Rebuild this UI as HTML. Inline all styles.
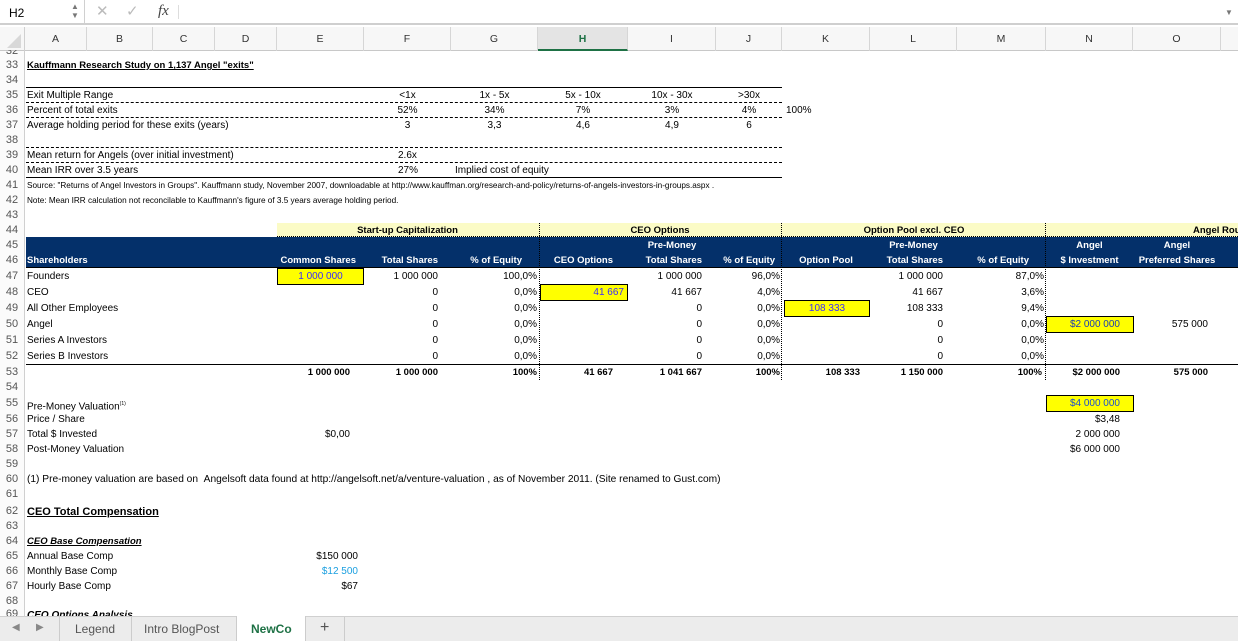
<!DOCTYPE html>
<html><head><meta charset="utf-8"><style>
*{margin:0;padding:0;box-sizing:border-box}
body{width:1238px;height:641px;overflow:hidden;background:#fff;position:relative;font-family:"Liberation Sans",sans-serif;color:#000}
.a{position:absolute;height:14px;line-height:14px;white-space:nowrap;font-size:10px;margin-top:1px}
.r{text-align:right}.c{text-align:center}.b{font-weight:bold}
.rn{position:absolute;left:0;width:24px;text-align:center;font-size:11px;color:#555;height:14px;line-height:14px}
.ch{position:absolute;top:27px;height:24px;line-height:24px;text-align:center;font-size:10.5px;color:#333;border-right:1px solid #d6d6d6}
.ln{position:absolute;height:0}
.vd{position:absolute;width:0;border-left:1.5px dotted #000}
.yb{position:absolute;background:#ffff00;border:1px solid #000}
.w{color:#fff;font-weight:bold;font-size:9.5px}
.blue{color:#3a2cff}
</style></head><body>
<div style="position:absolute;left:0;top:0;width:1238px;height:25px;background:#fff;border-bottom:2px solid #cfcfcf"></div>
<div class="a" style="left:9px;top:4px;font-size:12px;height:16px;line-height:16px">H2</div>
<div class="a" style="left:71px;top:1px;font-size:8px;color:#777;line-height:9px">▲<br>▼</div>
<div style="position:absolute;left:84px;top:0;width:1px;height:25px;background:#d0d0d0"></div>
<div class="a" style="left:96px;top:3px;font-size:15px;color:#bbb;height:16px;line-height:16px">✕</div>
<div class="a" style="left:126px;top:3px;font-size:15px;color:#bbb;height:16px;line-height:16px">✓</div>
<div class="a" style="left:158px;top:2px;font-size:15px;font-style:italic;font-family:'Liberation Serif',serif;color:#444;height:16px;line-height:16px">fx</div>
<div style="position:absolute;left:178px;top:5px;width:1px;height:14px;background:#ddd"></div>
<div class="a" style="left:1225px;top:5px;font-size:8px;color:#777">▼</div>
<div style="position:absolute;left:0;top:27px;width:1238px;height:24px;background:#f7f7f7;border-bottom:1px solid #c8c8c8"></div>
<div style="position:absolute;left:0;top:27px;width:25px;height:24px;border-right:1px solid #d0d0d0"><div style="position:absolute;right:3px;bottom:3px;width:0;height:0;border-left:14px solid transparent;border-bottom:14px solid #d8d8d8"></div></div>
<div class="ch" style="left:25px;width:62px">A</div>
<div class="ch" style="left:87px;width:66px">B</div>
<div class="ch" style="left:153px;width:62px">C</div>
<div class="ch" style="left:215px;width:62px">D</div>
<div class="ch" style="left:277px;width:87px">E</div>
<div class="ch" style="left:364px;width:87px">F</div>
<div class="ch" style="left:451px;width:87px">G</div>
<div class="ch" style="left:538px;width:90px;background:#e4e4e4;color:#1e7145;font-weight:bold;border-bottom:2px solid #1e7145">H</div>
<div class="ch" style="left:628px;width:88px">I</div>
<div class="ch" style="left:716px;width:66px">J</div>
<div class="ch" style="left:782px;width:88px">K</div>
<div class="ch" style="left:870px;width:87px">L</div>
<div class="ch" style="left:957px;width:89px">M</div>
<div class="ch" style="left:1046px;width:87px">N</div>
<div class="ch" style="left:1133px;width:88px">O</div>
<div style="position:absolute;left:0;top:51px;width:25px;height:565px;background:#fbfbfb;border-right:1px solid #d0d0d0"></div>
<div class="rn" style="top:50px;height:6px;overflow:hidden;line-height:2px">32</div>
<div class="rn" style="top:58px">33</div><div class="rn" style="top:73px">34</div><div class="rn" style="top:88px">35</div><div class="rn" style="top:103px">36</div><div class="rn" style="top:118px">37</div><div class="rn" style="top:133px">38</div><div class="rn" style="top:148px">39</div><div class="rn" style="top:163px">40</div><div class="rn" style="top:178px">41</div><div class="rn" style="top:193px">42</div><div class="rn" style="top:208px">43</div><div class="rn" style="top:223px">44</div><div class="rn" style="top:238px">45</div><div class="rn" style="top:253px">46</div><div class="rn" style="top:269px">47</div><div class="rn" style="top:285px">48</div><div class="rn" style="top:301px">49</div><div class="rn" style="top:317px">50</div><div class="rn" style="top:333px">51</div><div class="rn" style="top:349px">52</div><div class="rn" style="top:365px">53</div><div class="rn" style="top:380px">54</div><div class="rn" style="top:396px">55</div><div class="rn" style="top:412px">56</div><div class="rn" style="top:427px">57</div><div class="rn" style="top:442px">58</div><div class="rn" style="top:457px">59</div><div class="rn" style="top:472px">60</div><div class="rn" style="top:487px">61</div><div class="rn" style="top:504px">62</div><div class="rn" style="top:519px">63</div><div class="rn" style="top:534px">64</div><div class="rn" style="top:549px">65</div><div class="rn" style="top:564px">66</div><div class="rn" style="top:579px">67</div><div class="rn" style="top:594px">68</div><div class="rn" style="top:607px">69</div>

<div class="a b" style="left:27px;top:58px;text-decoration:underline;font-size:9.5px">Kauffmann Research Study on 1,137 Angel "exits"</div>
<div class="ln" style="left:26px;top:87px;width:756px;border-top:1px solid #000"></div>
<div class="ln" style="left:26px;top:102px;width:756px;border-top:1px dashed #000"></div>
<div class="ln" style="left:26px;top:117px;width:756px;border-top:1px dashed #000"></div>
<div class="ln" style="left:26px;top:147px;width:756px;border-top:1px dashed #000"></div>
<div class="ln" style="left:26px;top:162px;width:756px;border-top:1px dashed #000"></div>
<div class="ln" style="left:26px;top:177px;width:756px;border-top:1px solid #000"></div>
<div class="a" style="left:27px;top:88px">Exit Multiple Range</div>
<div class="a" style="left:27px;top:103px">Percent of total exits</div>
<div class="a" style="left:27px;top:118px">Average holding period for these exits (years)</div>
<div class="a" style="left:27px;top:148px">Mean return for Angels (over initial investment)</div>
<div class="a" style="left:27px;top:163px">Mean IRR over 3.5 years</div>
<div class="a c" style="left:364px;width:87px;top:88px">&lt;1x</div>
<div class="a c" style="left:451px;width:87px;top:88px">1x - 5x</div>
<div class="a c" style="left:538px;width:90px;top:88px">5x - 10x</div>
<div class="a c" style="left:628px;width:88px;top:88px">10x - 30x</div>
<div class="a c" style="left:716px;width:66px;top:88px">&gt;30x</div>
<div class="a c" style="left:364px;width:87px;top:103px">52%</div>
<div class="a c" style="left:451px;width:87px;top:103px">34%</div>
<div class="a c" style="left:538px;width:90px;top:103px">7%</div>
<div class="a c" style="left:628px;width:88px;top:103px">3%</div>
<div class="a c" style="left:716px;width:66px;top:103px">4%</div>
<div class="a" style="left:786px;top:103px">100%</div>
<div class="a c" style="left:364px;width:87px;top:118px">3</div>
<div class="a c" style="left:451px;width:87px;top:118px">3,3</div>
<div class="a c" style="left:538px;width:90px;top:118px">4,6</div>
<div class="a c" style="left:628px;width:88px;top:118px">4,9</div>
<div class="a c" style="left:716px;width:66px;top:118px">6</div>
<div class="a" style="left:398px;top:148px">2.6x</div>
<div class="a" style="left:398px;top:163px">27%</div>
<div class="a" style="left:455px;top:163px">Implied cost of equity</div>
<div class="a" style="left:27px;top:178px;font-size:8.2px">Source: "Returns of Angel Investors in Groups". Kauffmann study, November 2007, downloadable at http://www.kauffman.org/research-and-policy/returns-of-angels-investors-in-groups.aspx .</div>
<div class="a" style="left:27px;top:193px;font-size:8.2px">Note: Mean IRR calculation not reconcilable to Kauffmann's figure of 3.5 years average holding period.</div>

<div style="position:absolute;left:277px;top:223px;width:961px;height:14px;background:#fbfbc6;border-bottom:1px dotted #000"></div>
<div style="position:absolute;left:26px;top:237px;width:1212px;height:31px;background:#04306a;border-bottom:1.5px solid #000"></div>
<div class="ln" style="left:26px;top:364px;width:1212px;border-top:1.5px solid #000"></div>
<div class="vd" style="left:539px;top:223px;height:157px"></div>
<div class="vd" style="left:781px;top:223px;height:157px"></div>
<div class="vd" style="left:1045px;top:223px;height:157px"></div>
<div class="a b c" style="left:277px;width:261px;top:223px;font-size:9.5px">Start-up Capitalization</div>
<div class="a b c" style="left:540px;width:240px;top:223px;font-size:9.5px">CEO Options</div>
<div class="a b c" style="left:783px;width:262px;top:223px;font-size:9.5px">Option Pool excl. CEO</div>
<div class="a b" style="left:1193px;top:223px;font-size:9.5px">Angel Rou</div>
<div class="a w c" style="left:628px;width:88px;top:238px">Pre-Money</div>
<div class="a w c" style="left:870px;width:87px;top:238px">Pre-Money</div>
<div class="a w c" style="left:1046px;width:87px;top:238px">Angel</div>
<div class="a w c" style="left:1133px;width:88px;top:238px">Angel</div>
<div class="a w" style="left:27px;top:253px">Shareholders</div>
<div class="a w r" style="left:0;width:356px;top:253px">Common Shares</div>
<div class="a w r" style="left:0;width:438px;top:253px">Total Shares</div>
<div class="a w r" style="left:0;width:522px;top:253px">% of Equity</div>
<div class="a w r" style="left:0;width:613px;top:253px">CEO Options</div>
<div class="a w r" style="left:0;width:702px;top:253px">Total Shares</div>
<div class="a w r" style="left:0;width:775px;top:253px">% of Equity</div>
<div class="a w c" style="left:782px;width:88px;top:253px">Option Pool</div>
<div class="a w r" style="left:0;width:943px;top:253px">Total Shares</div>
<div class="a w r" style="left:0;width:1029px;top:253px">% of Equity</div>
<div class="a w c" style="left:1046px;width:87px;top:253px">$ Investment</div>
<div class="a w c" style="left:1133px;width:88px;top:253px">Preferred Shares</div>

<div class="yb" style="left:277px;top:268px;width:87px;height:17px"></div>
<div class="yb" style="left:540px;top:284px;width:88px;height:17px"></div>
<div class="yb" style="left:784px;top:300px;width:86px;height:17px"></div>
<div class="yb" style="left:1046px;top:316px;width:88px;height:17px"></div>

<div class="a" style="left:27px;top:269px">Founders</div>
<div class="a" style="left:27px;top:285px">CEO</div>
<div class="a" style="left:27px;top:301px">All Other Employees</div>
<div class="a" style="left:27px;top:317px">Angel</div>
<div class="a" style="left:27px;top:333px">Series A Investors</div>
<div class="a" style="left:27px;top:349px">Series B Investors</div>

<div class="a blue c" style="left:277px;width:87px;top:269px">1 000 000</div>
<div class="a blue r" style="left:0;width:624px;top:285px">41 667</div>
<div class="a blue c" style="left:784px;width:86px;top:301px">108 333</div>
<div class="a r" style="left:0;width:1120px;top:317px;color:#1a3bb5">$2 000 000</div>
<div class="a r" style="left:0;width:1208px;top:317px">575 000</div>

<div class="a r" style="left:0;width:438px;top:269px">1 000 000</div><div class="a r" style="left:0;width:537px;top:269px">100,0%</div>
<div class="a r" style="left:0;width:438px;top:285px">0</div><div class="a r" style="left:0;width:537px;top:285px">0,0%</div>
<div class="a r" style="left:0;width:438px;top:301px">0</div><div class="a r" style="left:0;width:537px;top:301px">0,0%</div>
<div class="a r" style="left:0;width:438px;top:317px">0</div><div class="a r" style="left:0;width:537px;top:317px">0,0%</div>
<div class="a r" style="left:0;width:438px;top:333px">0</div><div class="a r" style="left:0;width:537px;top:333px">0,0%</div>
<div class="a r" style="left:0;width:438px;top:349px">0</div><div class="a r" style="left:0;width:537px;top:349px">0,0%</div>
<div class="a r" style="left:0;width:702px;top:269px">1 000 000</div><div class="a r" style="left:0;width:780px;top:269px">96,0%</div>
<div class="a r" style="left:0;width:702px;top:285px">41 667</div><div class="a r" style="left:0;width:780px;top:285px">4,0%</div>
<div class="a r" style="left:0;width:702px;top:301px">0</div><div class="a r" style="left:0;width:780px;top:301px">0,0%</div>
<div class="a r" style="left:0;width:702px;top:317px">0</div><div class="a r" style="left:0;width:780px;top:317px">0,0%</div>
<div class="a r" style="left:0;width:702px;top:333px">0</div><div class="a r" style="left:0;width:780px;top:333px">0,0%</div>
<div class="a r" style="left:0;width:702px;top:349px">0</div><div class="a r" style="left:0;width:780px;top:349px">0,0%</div>
<div class="a r" style="left:0;width:943px;top:269px">1 000 000</div><div class="a r" style="left:0;width:1044px;top:269px">87,0%</div>
<div class="a r" style="left:0;width:943px;top:285px">41 667</div><div class="a r" style="left:0;width:1044px;top:285px">3,6%</div>
<div class="a r" style="left:0;width:943px;top:301px">108 333</div><div class="a r" style="left:0;width:1044px;top:301px">9,4%</div>
<div class="a r" style="left:0;width:943px;top:317px">0</div><div class="a r" style="left:0;width:1044px;top:317px">0,0%</div>
<div class="a r" style="left:0;width:943px;top:333px">0</div><div class="a r" style="left:0;width:1044px;top:333px">0,0%</div>
<div class="a r" style="left:0;width:943px;top:349px">0</div><div class="a r" style="left:0;width:1044px;top:349px">0,0%</div>
<div class="a b r" style="left:0;width:350px;top:365px;font-size:9.5px">1 000 000</div>
<div class="a b r" style="left:0;width:438px;top:365px;font-size:9.5px">1 000 000</div>
<div class="a b r" style="left:0;width:537px;top:365px;font-size:9.5px">100%</div>
<div class="a b r" style="left:0;width:613px;top:365px;font-size:9.5px">41 667</div>
<div class="a b r" style="left:0;width:702px;top:365px;font-size:9.5px">1 041 667</div>
<div class="a b r" style="left:0;width:780px;top:365px;font-size:9.5px">100%</div>
<div class="a b r" style="left:0;width:860px;top:365px;font-size:9.5px">108 333</div>
<div class="a b r" style="left:0;width:943px;top:365px;font-size:9.5px">1 150 000</div>
<div class="a b r" style="left:0;width:1042px;top:365px;font-size:9.5px">100%</div>
<div class="a b r" style="left:0;width:1120px;top:365px;font-size:9.5px">$2 000 000</div>
<div class="a b r" style="left:0;width:1208px;top:365px;font-size:9.5px">575 000</div>

<div class="yb" style="left:1046px;top:395px;width:88px;height:17px"></div>
<div class="a" style="left:27px;top:396px">Pre-Money Valuation<sup style="font-size:5px">(1)</sup></div>
<div class="a" style="left:27px;top:412px">Price / Share</div>
<div class="a" style="left:27px;top:427px">Total $ Invested</div>
<div class="a" style="left:27px;top:442px">Post-Money Valuation</div>
<div class="a r" style="left:0;width:350px;top:427px">$0,00</div>
<div class="a r" style="left:0;width:1120px;top:396px;color:#1a4fd0">$4 000 000</div>
<div class="a r" style="left:0;width:1120px;top:412px">$3,48</div>
<div class="a r" style="left:0;width:1120px;top:427px">2 000 000</div>
<div class="a r" style="left:0;width:1120px;top:442px">$6 000 000</div>
<div class="a" style="left:27px;top:472px;font-size:10.2px">(1) Pre-money valuation are based on &nbsp;Angelsoft data found at http://angelsoft.net/a/venture-valuation , as of November 2011. (Site renamed to Gust.com)</div>

<div class="a b" style="left:27px;top:503px;font-size:11px;height:16px;line-height:16px;text-decoration:underline">CEO Total Compensation</div>
<div class="a b" style="left:27px;top:534px;font-style:italic;text-decoration:underline;font-size:9.5px">CEO Base Compensation</div>
<div class="a" style="left:27px;top:549px">Annual Base Comp</div>
<div class="a" style="left:27px;top:564px">Monthly Base Comp</div>
<div class="a" style="left:27px;top:579px">Hourly Base Comp</div>
<div class="a r" style="left:0;width:358px;top:549px">$150 000</div>
<div class="a r" style="left:0;width:358px;top:564px;color:#1a9fe0">$12 500</div>
<div class="a r" style="left:0;width:358px;top:579px">$67</div>
<div class="a b" style="left:27px;top:608px;font-style:italic;height:7px;overflow:hidden">CEO Options Analysis</div>

<div style="position:absolute;left:0;top:616px;width:1238px;height:25px;background:#ececec;border-top:1px solid #d0d0d0"></div>
<div class="a" style="left:12px;top:620px;font-size:10px;color:#888">◀</div>
<div class="a" style="left:36px;top:620px;font-size:10px;color:#888">▶</div>
<div style="position:absolute;left:59px;top:617px;width:1px;height:24px;background:#ccc"></div>
<div class="a" style="left:75px;top:620px;font-size:12px;color:#555;height:16px;line-height:16px">Legend</div>
<div style="position:absolute;left:131px;top:617px;width:1px;height:24px;background:#ccc"></div>
<div class="a" style="left:144px;top:620px;font-size:12px;color:#555;height:16px;line-height:16px">Intro BlogPost</div>
<div style="position:absolute;left:236px;top:616px;width:70px;height:25px;background:#fff;border-left:1px solid #ccc;border-right:1px solid #ccc"></div>
<div class="a b" style="left:251px;top:620px;font-size:12px;color:#1e7145;height:16px;line-height:16px">NewCo</div>
<div class="a" style="left:320px;top:618px;font-size:16px;color:#555;height:18px;line-height:18px">+</div>
<div style="position:absolute;left:344px;top:617px;width:1px;height:24px;background:#ccc"></div>
</body></html>
